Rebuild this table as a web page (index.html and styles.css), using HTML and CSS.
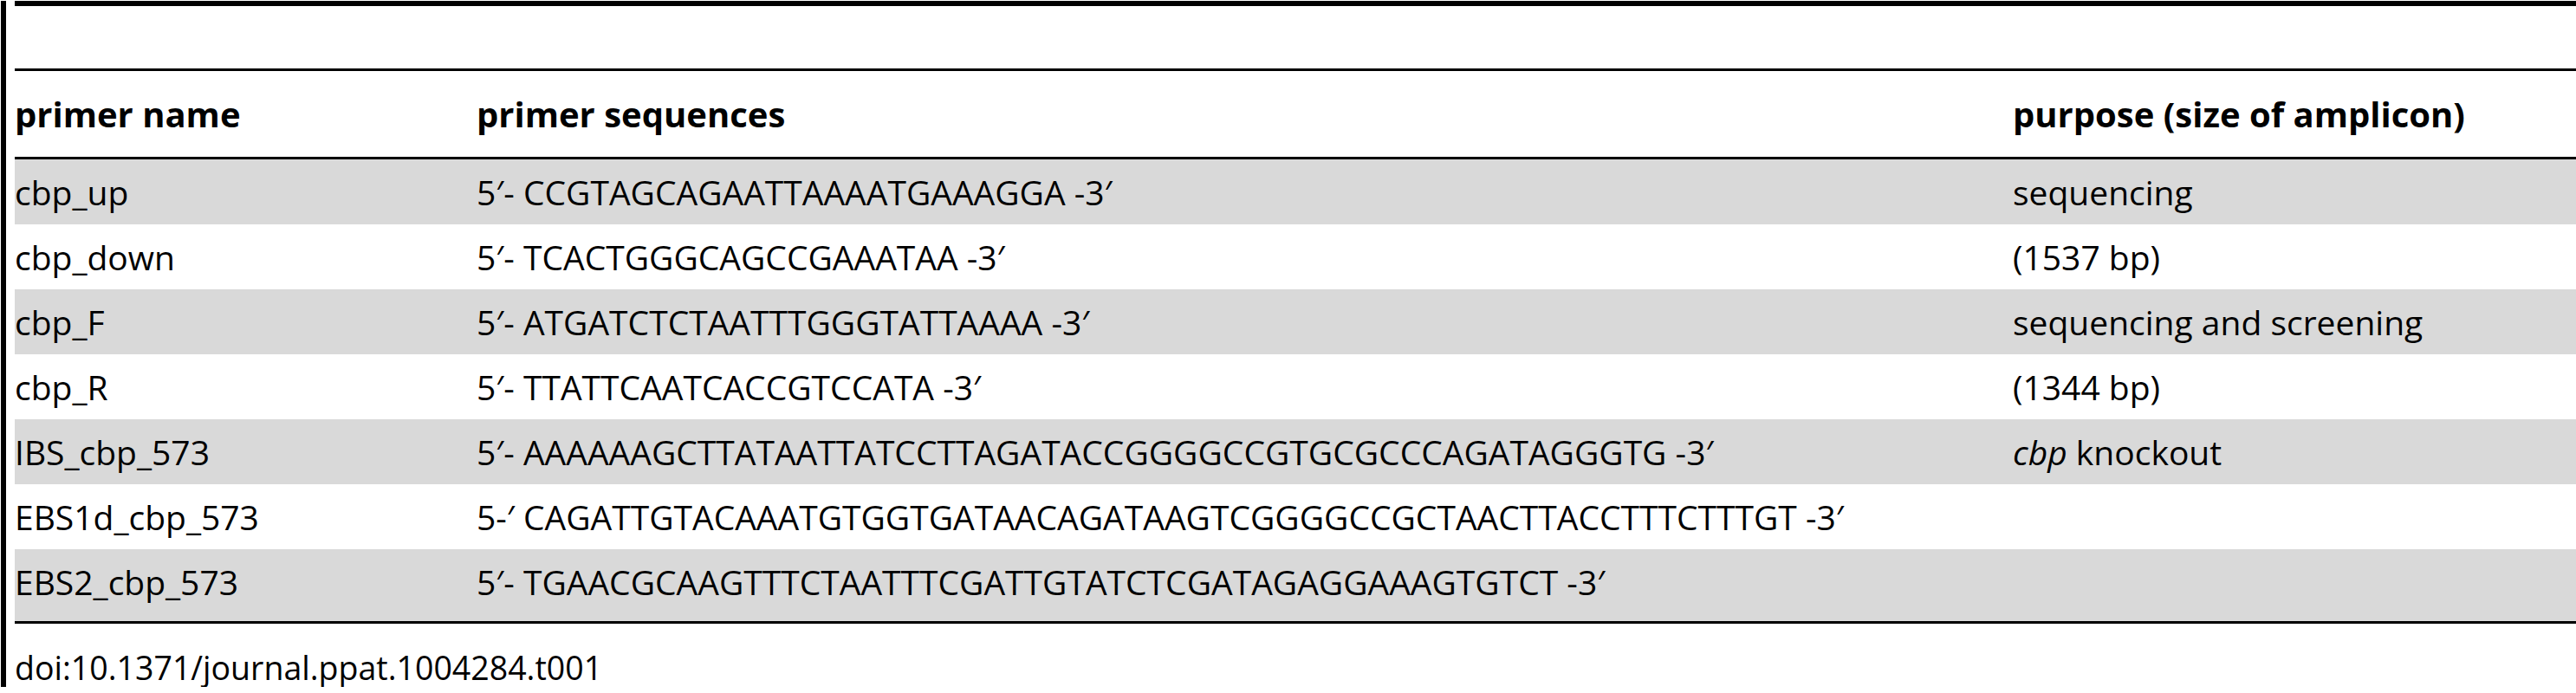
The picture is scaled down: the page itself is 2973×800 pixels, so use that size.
FILE: index.html
```html
<!DOCTYPE html>
<html lang="en">
<head>
<meta charset="utf-8">
<title>Primers</title>
<link rel="stylesheet" href="styles.css">
</head>
<body>
<div class="frame">
  <div class="topline"></div>
  <table class="primers">
    <thead>
      <tr><th class="c-name">primer name</th><th class="c-seq">primer sequences</th><th class="c-purpose">purpose (size of amplicon)</th></tr>
    </thead>
    <tbody>
      <tr class="shade"><td>cbp_up</td><td>5′- CCGTAGCAGAATTAAAATGAAAGGA -3′</td><td>sequencing</td></tr>
      <tr><td>cbp_down</td><td>5′- TCACTGGGCAGCCGAAATAA -3′</td><td>(1537 bp)</td></tr>
      <tr class="shade"><td>cbp_F</td><td>5′- ATGATCTCTAATTTGGGTATTAAAA -3′</td><td>sequencing and screening</td></tr>
      <tr><td>cbp_R</td><td>5′- TTATTCAATCACCGTCCATA -3′</td><td>(1344 bp)</td></tr>
      <tr class="shade"><td>IBS_cbp_573</td><td>5′- AAAAAAGCTTATAATTATCCTTAGATACCGGGGCCGTGCGCCCAGATAGGGTG -3′</td><td><i>cbp</i> knockout</td></tr>
      <tr><td>EBS1d_cbp_573</td><td>5-′ CAGATTGTACAAATGTGGTGATAACAGATAAGTCGGGGCCGCTAACTTACCTTTCTTTGT -3′</td><td></td></tr>
      <tr class="shade last"><td>EBS2_cbp_573</td><td>5′- TGAACGCAAGTTTCTAATTTCGATTGTATCTCGATAGAGGAAAGTGTCT -3′</td><td></td></tr>
    </tbody>
  </table>
  <p class="doi">doi:10.1371/journal.ppat.1004284.t001</p>
</div>
</body>
</html>
```
FILE: styles.css
```css
html, body {
  margin: 0;
  padding: 0;
  background: #fff;
}
body {
  font-family: "Open Sans", "Noto Sans", sans-serif;
  color: #000;
}
.frame {
  box-sizing: border-box;
  width: 2972px;
  height: 792px;
  margin-left: 1px;
  border-left: 6px solid #000;
  padding-left: 10px;
}
.topline {
  height: 6px;
  margin-top: 1px;
  background: #000;
}
.primers {
  width: 100%;
  margin-top: 72px;
  border-collapse: separate;
  border-spacing: 0;
  table-layout: fixed;
}
.c-name { width: 533px; }
.c-seq { width: 1773px; }
.primers th,
.primers td {
  padding: 0;
  text-align: left;
  vertical-align: middle;
  white-space: nowrap;
}
.primers th {
  font-size: 40px;
  font-weight: 700;
  line-height: 99px;
  border-top: 3px solid #000;
  border-bottom: 3px solid #000;
}
.primers td {
  font-size: 39px;
  line-height: 75px;
}
.primers tr.shade td {
  background: #d9d9d9;
}
.primers tr.last td {
  line-height: 75px;
  padding-bottom: 8px;
  border-bottom: 3px solid #000;
}
.doi {
  margin: 0;
  padding-top: 25px;
  font-size: 37.5px;
  line-height: 52px;
}
```
